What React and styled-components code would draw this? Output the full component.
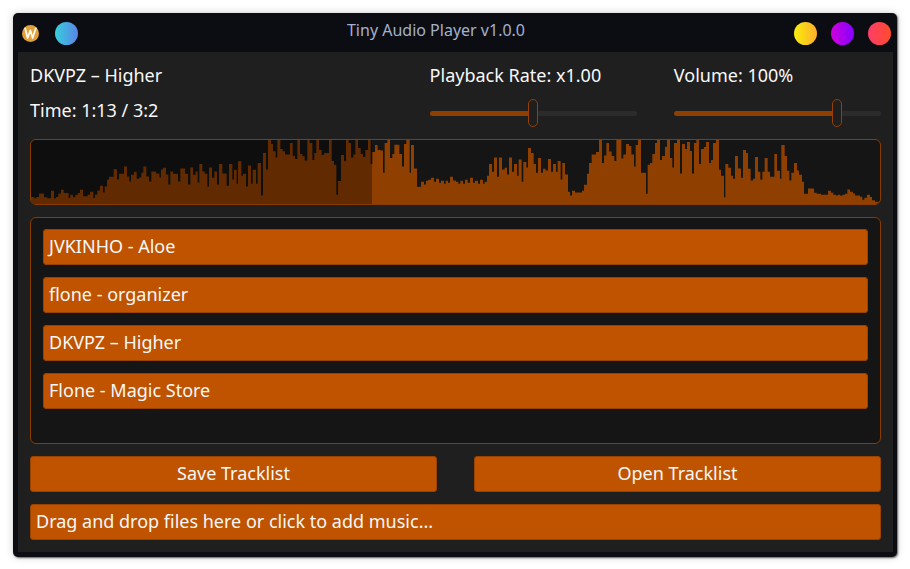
import React, { useState } from "react";
import styled, { createGlobalStyle } from "styled-components";

const GlobalStyle = createGlobalStyle`
  *, *::before, *::after { box-sizing: border-box; }
  body {
    margin: 0;
    background: #ffffff;
    font-family: "Noto Sans", sans-serif;
    font-size: 18px;
    line-height: 24px;
    color: #f8f8f8;
  }
  button, input { font: inherit; color: inherit; margin: 0; }
`;

const Desktop = styled.div`
  display: flex;
  min-height: 100vh;
  padding: 13px 13px 12px;
`;

const Window = styled.main`
  flex: 1;
  min-width: 0;
  display: flex;
  flex-direction: column;
  background: #0c0d13;
  border-radius: 5px;
  box-shadow: 1px 1px 2px rgba(0, 0, 0, 0.6), 0 0 8px rgba(0, 0, 0, 0.18);
`;

const TitleBar = styled.header`
  display: flex;
  align-items: center;
  height: 39px;
  padding: 2px 6px 0 9px;
`;

const IconGroup = styled.div`
  display: flex;
  align-items: center;
  gap: ${(p) => p.$gap};
`;

const Title = styled.h1`
  flex: 1;
  margin: 0;
  padding-bottom: 8px;
  text-align: center;
  font-size: 16px;
  line-height: 24px;
  font-weight: 400;
  color: #a3b2cb;
`;

const Logo = styled.svg`
  display: block;
  width: 17px;
  height: 17px;
`;

const RoundButton = styled.button`
  width: 23px;
  height: 23px;
  padding: 0;
  border: 0;
  border-radius: 50%;
  background: linear-gradient(90deg, ${(p) => p.$from}, ${(p) => p.$to});
  cursor: pointer;
`;

const Content = styled.div`
  flex: 1;
  display: flex;
  flex-direction: column;
  gap: 12px;
  margin: 0 4px 5px 5px;
  padding: 12px;
  background: #1f1f1f;
`;

const Header = styled.section`
  display: grid;
  grid-template-columns: 7fr 4fr 4fr;
  column-gap: 37px;
  height: 63px;
`;

const HeaderColumn = styled.div`
  display: flex;
  flex-direction: column;
  gap: 13px;
  min-width: 0;
`;

const Line = styled.div`
  height: 22px;
  line-height: 22px;
  white-space: nowrap;
`;

const SliderLabel = styled.label`
  display: block;
  height: 22px;
  line-height: 22px;
  white-space: nowrap;
`;

const Slider = styled.input.attrs({ type: "range" })`
  appearance: none;
  display: block;
  width: 100%;
  height: 28px;
  background: transparent;
  cursor: pointer;

  &::-webkit-slider-runnable-track {
    height: 5px;
    border-radius: 3px;
    background: linear-gradient(
      90deg,
      #8f3f00 ${(p) => p.$fill}%,
      #2b2b2b ${(p) => p.$fill}%
    );
  }

  &::-webkit-slider-thumb {
    appearance: none;
    width: 10px;
    height: 28px;
    margin-top: -12px;
    border: 1px solid #963f00;
    border-radius: 5px;
    background: #1f1f1f;
  }
`;

const Waveform = styled.section`
  position: relative;
  height: 66px;
  border: 1px solid #8a3c00;
  border-radius: 6px;
  background: #151515;
  overflow: hidden;
`;

const WaveSvg = styled.svg`
  display: block;
  width: 100%;
  height: 100%;
`;

const Played = styled.div`
  position: absolute;
  inset: 0 auto 0 0;
  background: rgba(0, 0, 0, 0.32);
`;

const TrackList = styled.ul`
  flex: 1;
  display: flex;
  flex-direction: column;
  gap: 12px;
  margin: 0;
  padding: 11px 12px;
  list-style: none;
  border: 1px solid #8a3c00;
  border-radius: 6px;
  background: #151515;
`;

const Button = styled.button`
  display: block;
  width: 100%;
  height: 36px;
  padding: 0 5px 2px;
  border: 1px solid #9a4300;
  border-radius: 3px;
  background: #bf5300;
  text-align: ${(p) => p.$align || "left"};
  line-height: 32px;
  white-space: nowrap;
  cursor: pointer;
`;

const ButtonRow = styled.div`
  display: grid;
  grid-template-columns: 1fr 1fr;
  gap: 37px;
`;

// Each section holds "x,y" steps: where a level starts and how far below the top it lies.
const WAVE_SECTIONS = [
  [0, "18,190 28,194 34,190 42,179 57,191 67,194 78,171 87,194 93,190 100,179 108,168 116,178 131,193 136,183 144,191 151,183 159,178 165,168 174,188 188,183 195,174 205,193 210,182 217,170 225,156 234,176 239,158 246,138 252,129 266,106 276,137 282,120 297,98 306,128 313,143 318,123 327,114 335,135 342,131 349,117 355,98 364,128 372,143 379,113 393,119 403,131 408,107 414,102 423,122 430,152 436,113 444,120 459,143 466,104 480,120 489,152 496,101 504,123 512,113 518,146 523,90 532,113 539,120 547,158 552,101 561,132 568,113 576,152 582,90 592,119 605,156 612,90 622,137"],
  [630, "-3,108 5,150 9,82 19,126 24,120 33,158 39,95 48,150 53,108 63,150 68,87 78,185 84,57 93,107 99,18 108,30 114,52 122,71 127,18 136,45 143,52 150,62 165,27 173,66 180,75 187,18 195,60 202,67 209,80 217,18 224,27 232,78 238,57 244,18 252,48 260,63 267,57 282,18 290,81 297,93 304,183 309,142 318,63 327,82 333,18 341,27 348,71 355,62 361,18 369,42 377,60 384,69 391,48 399,18 407,90 412,54 420,33 428,48 436,50 444,117 449,27 457,18 465,72 472,60 478,32 493,60 501,98 507,30 514,18 524,117 528,33 537,104 546,159 558,144 567,152 573,141 580,138 588,132 597,144 603,135 612,147 618,141 627,150"],
  [1260, "2,141 9,147 15,129 24,140 33,144 40,150 46,141 54,150 60,138 68,147 75,132 84,147 90,141 99,150 105,138 114,150 119,144 126,126 132,90 141,114 147,71 156,129 162,71 171,107 179,102 186,122 192,71 201,114 207,90 216,126 221,77 230,144 235,84 244,101 249,42 258,57 266,90 273,117 279,72 288,117 294,105 302,110 309,75 318,114 324,90 333,114 338,81 347,137 352,87 360,122 369,174 375,185 381,171 390,176 411,171 417,153 426,120 432,87 440,62 453,54 462,18 471,87 477,65 484,27 492,53 500,66 508,81 514,18 529,74 535,62 543,30 552,36 559,62 567,98 572,33 579,18 588,117 603,180 608,93 615,87 622,60 630,27 636,18 645,78 651,66"],
  [1920, "0,38 6,18 15,72 22,101 27,27 36,18 45,119 51,30 60,45 66,24 75,51 81,119 87,27 94,18 102,90 108,45 117,39 123,24 132,87 138,78 144,27 153,18 162,108 168,126 177,191 181,90 190,102 198,126 204,135 210,66 219,104 228,132 234,48 243,57 249,105 257,140 264,135 270,69 279,114 286,138 292,114 299,72 308,114 315,129 328,60 336,111 345,135 349,33 359,66 366,111 373,140 379,117 387,87 396,110 402,123 411,144 417,180 429,164 447,177 455,180 468,183 489,171 498,177 505,183 513,185 519,183 526,186 532,183 540,180 547,167 555,174 564,179 570,185 585,189 592,198 598,192 606,183 615,190 621,200 630,204"],
];

const WAVE_PATH =
  "M18 211" +
  WAVE_SECTIONS.map(([offset, steps]) =>
    steps
      .split(" ")
      .map((step) => {
        const [x, y] = step.split(",").map(Number);
        return `H${x + offset}V${y}`;
      })
      .join("")
  ).join("") +
  "H2565V211Z";

const TRACKS = [
  "JVKINHO - Aloe",
  "flone - organizer",
  "DKVPZ – Higher",
  "Flone - Magic Store",
];

const PROGRESS = 40.2;

export default function App() {
  const [rate, setRate] = useState(1);
  const [volume, setVolume] = useState(100);

  return (
    <>
      <GlobalStyle />
      <Desktop>
        <Window>
          <TitleBar>
            <IconGroup $gap="16px">
              <Logo viewBox="0 0 17 17" aria-hidden="true">
                <circle cx="8.5" cy="8.5" r="8.5" fill="#e0a03a" />
                <path
                  d="M3.2 3.4 L5.6 13 L8.4 5.4 L10.6 13 L13.8 3.4"
                  fill="none"
                  stroke="#fffaf0"
                  strokeWidth="1.8"
                  strokeLinejoin="round"
                  strokeLinecap="round"
                />
              </Logo>
              <RoundButton aria-label="Pin window" $from="#36cfdd" $to="#5b83e6" />
            </IconGroup>
            <Title>Tiny Audio Player v1.0.0</Title>
            <IconGroup $gap="14px">
              <RoundButton aria-label="Minimize" $from="#f8ee0c" $to="#ffae2c" />
              <RoundButton aria-label="Maximize" $from="#cf00dc" $to="#8500ff" />
              <RoundButton aria-label="Close" $from="#ff3d68" $to="#ff4c2c" />
            </IconGroup>
          </TitleBar>

          <Content>
            <Header>
              <HeaderColumn>
                <Line>DKVPZ – Higher</Line>
                <Line>Time: 1:13 / 3:2</Line>
              </HeaderColumn>
              <HeaderColumn>
                <SliderLabel htmlFor="rate">Playback Rate: x{rate.toFixed(2)}</SliderLabel>
                <Slider
                  id="rate"
                  min="0"
                  max="2"
                  step="0.05"
                  value={rate}
                  $fill={(rate / 2) * 100}
                  onChange={(e) => setRate(Number(e.target.value))}
                />
              </HeaderColumn>
              <HeaderColumn>
                <SliderLabel htmlFor="volume">Volume: {volume}%</SliderLabel>
                <Slider
                  id="volume"
                  min="0"
                  max="125"
                  value={volume}
                  $fill={(volume / 125) * 100}
                  onChange={(e) => setVolume(Number(e.target.value))}
                />
              </HeaderColumn>
            </Header>

            <Waveform aria-label="Waveform">
              <WaveSvg viewBox="18 18 2547 193" preserveAspectRatio="none" aria-hidden="true">
                <path d={WAVE_PATH} fill="#8f3f00" />
              </WaveSvg>
              <Played style={{ width: `${PROGRESS}%` }} />
            </Waveform>

            <TrackList>
              {TRACKS.map((track) => (
                <li key={track}>
                  <Button type="button">{track}</Button>
                </li>
              ))}
            </TrackList>

            <ButtonRow>
              <Button type="button" $align="center">Save Tracklist</Button>
              <Button type="button" $align="center">Open Tracklist</Button>
            </ButtonRow>

            <Button type="button">Drag and drop files here or click to add music...</Button>
          </Content>
        </Window>
      </Desktop>
    </>
  );
}
